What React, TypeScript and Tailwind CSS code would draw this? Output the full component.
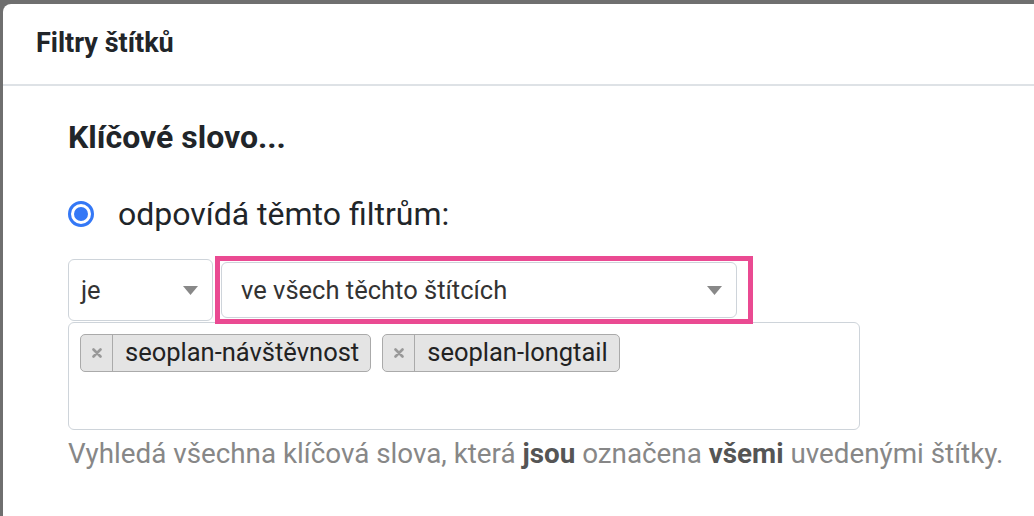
import React from "react";

function Caret() {
  return (
    <svg width="15" height="9" viewBox="0 0 15 9" className="shrink-0">
      <path d="M0 0 L15 0 L7.5 9 Z" fill="#888" />
    </svg>
  );
}

function Tag({ label }: { label: string }) {
  return (
    <div className="flex h-[38px] items-stretch rounded-[5px] border border-[#aaa] bg-[#e4e4e4] text-[25.5px] text-[#222]">
      <span className="flex w-[32px] items-center justify-center border-r border-[#aaa]">
        <svg width="10" height="10" viewBox="0 0 10 10">
          <path d="M1.5 1.5 L8.5 8.5 M8.5 1.5 L1.5 8.5" stroke="#999" strokeWidth="2.6" strokeLinecap="round" />
        </svg>
      </span>
      <span className="flex items-center pl-[12px] pr-[11px] pb-[1px]">{label}</span>
    </div>
  );
}

export default function App() {
  return (
    <div
      className="h-[516px] w-[1034px] overflow-hidden bg-[#6f6f6f] pl-[3px] pt-[4px]"
      style={{ fontFamily: "Roboto, 'Liberation Sans', sans-serif" }}
    >
      <div className="h-full w-full rounded-tl-[8px] bg-white">
        <div className="flex h-[82px] items-center border-b-2 border-[#dee2e6] pl-[33px] pb-[2px]">
          <h5 className="text-[27px] font-bold text-[#212529]">Filtry štítků</h5>
        </div>
        <div className="pl-[65px] pt-[32px]">
          <h4 className="text-[32px] font-bold leading-[38px] text-[#212529]">Klíčové slovo...</h4>
          <label className="mt-[39px] flex items-center gap-[24px]">
            <span className="flex h-[26px] w-[26px] items-center justify-center rounded-full border-[3px] border-[#3478f6] bg-white">
              <span className="h-[14px] w-[14px] rounded-full bg-[#3478f6]" />
            </span>
            <span className="text-[32px] leading-[38px] text-[#212529]">odpovídá těmto filtrům:</span>
          </label>
          <div className="mt-[26px] flex h-[62px] items-center">
            <div className="flex h-[62px] w-[145px] shrink-0 items-center justify-between rounded-[6px] border border-[#ced4da] pl-[12px] pr-[14px] text-[25.5px] text-[#333]">
              <span>je</span>
              <Caret />
            </div>
            <div className="ml-[2px] h-[68px] w-[538px] shrink-0 border-[5px] border-[#ea4a92] pl-[1px] pt-[1px]">
              <div className="flex h-[56px] w-[516px] items-center justify-between rounded-[6px] border border-[#ced4da] pl-[19px] pr-[14px] text-[25.5px] text-[#333]">
                <span>ve všech těchto štítcích</span>
                <Caret />
              </div>
            </div>
          </div>
          <div className="mt-[1px] h-[108px] w-[792px] rounded-[6px] border border-[#ced4da] px-[11px] pt-[11px]">
            <div className="flex gap-[11px]">
              <Tag label="seoplan-návštěvnost" />
              <Tag label="seoplan-longtail" />
            </div>
          </div>
          <p className="mt-[5px] whitespace-nowrap text-[27.8px] leading-[38px] text-[#878787]">
            Vyhledá všechna klíčová slova, která <b className="text-[#555]">jsou</b> označena{" "}
            <b className="text-[#555]">všemi</b> uvedenými štítky.
          </p>
        </div>
      </div>
    </div>
  );
}
